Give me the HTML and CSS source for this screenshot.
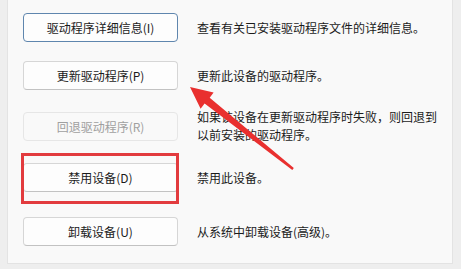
FILE: index.html
```html
<!DOCTYPE html>
<html lang="zh-CN">
<head>
<meta charset="utf-8">
<title>驱动程序</title>
<link rel="stylesheet" href="styles.css">
</head>
<body>
<div class="panel">
  <div class="row">
    <button class="btn btn-default">驱动程序详细信息(I)</button>
    <div class="desc">查看有关已安装驱动程序文件的详细信息。</div>
  </div>
  <div class="row">
    <button class="btn">更新驱动程序(P)</button>
    <div class="desc">更新此设备的驱动程序。</div>
  </div>
  <div class="row row-tall">
    <button class="btn btn-disabled">回退驱动程序(R)</button>
    <div class="desc">如果该设备在更新驱动程序时失败，则回退到<br>以前安装的驱动程序。</div>
  </div>
  <div class="row">
    <button class="btn">禁用设备(D)</button>
    <div class="desc">禁用此设备。</div>
  </div>
  <div class="row row-last">
    <button class="btn">卸载设备(U)</button>
    <div class="desc">从系统中卸载设备(高级)。</div>
  </div>
</div>
<div class="highlight"></div>
<svg class="arrow" width="461" height="269" viewBox="0 0 461 269">
  <polygon points="190,87 213.6,92.6 209.7,97.8 293.8,168 292.3,170 204.6,103.6 200.6,108.8" fill="#e9302f"/>
</svg>
</body>
</html>
```
FILE: styles.css
```css
html, body {
  margin: 0;
  padding: 0;
}
body {
  position: relative;
  width: 461px;
  height: 269px;
  overflow: hidden;
  background: #eeeeee;
  font-family: "Noto Sans CJK SC", "Microsoft YaHei", sans-serif;
  font-size: 12px;
  color: #1b1b1b;
}
.panel {
  box-sizing: border-box;
  margin-left: 7px;
  width: 446px;
  height: 264px;
  background: #f9f9f9;
  border: 1px solid #e3e3e3;
  border-top: none;
  padding: 13px 0 0 15px;
  display: flex;
  flex-direction: column;
  gap: 19px;
}
.row {
  display: flex;
  align-items: center;
  gap: 19px;
}
.row-tall {
  margin-top: -1px;
}
.row-last {
  margin-top: 6px;
}
.btn {
  box-sizing: border-box;
  width: 155px;
  height: 29px;
  flex: none;
  background: #fdfdfd;
  border: 1px solid #d6d6d6;
  border-bottom-color: #c2c2c2;
  border-radius: 4px;
  font-family: inherit;
  font-size: 12px;
  color: #1b1b1b;
  padding: 0;
  line-height: 27px;
}
.btn-default {
  border: 1px solid #5f86ae;
}
.btn-disabled {
  background: #f9f9f9;
  border-color: #e6e6e6;
  color: #a0a0a0;
}
.desc {
  line-height: 18px;
  white-space: nowrap;
}
.highlight {
  position: absolute;
  left: 21px;
  top: 153px;
  width: 158px;
  height: 51px;
  box-sizing: border-box;
  border: 3px solid #e23b3e;
}
.arrow {
  position: absolute;
  left: 0;
  top: 0;
}
```
